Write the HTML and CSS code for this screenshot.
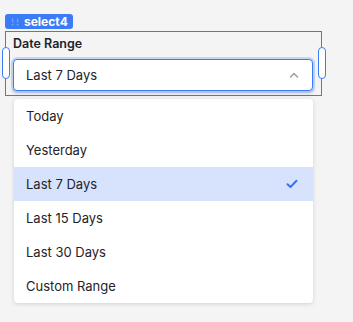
FILE: index.html
```html
<!DOCTYPE html>
<html lang="en">
<head>
    <meta charset="UTF-8">
    <title>Date Range Select</title>
    <link rel="stylesheet" href="styles.css">
</head>
<body>
    <div class="canvas">
        <div class="badge"><span class="grip">⋮⋮</span>select4</div>
        <div class="frame">
            <span class="handle handle-left"></span>
            <span class="handle handle-right"></span>
            <label class="field-label">Date Range</label>
            <div class="select">
                <span class="select-value">Last 7 Days</span>
                <svg class="chevron" width="10" height="6" viewBox="0 0 10 6">
                    <path d="M1.5 5 L5 1.5 L8.5 5" fill="none" stroke="#9ca3af" stroke-width="1.6" stroke-linecap="round" stroke-linejoin="round"/>
                </svg>
            </div>
        </div>
        <ul class="menu">
            <li class="option">Today</li>
            <li class="option">Yesterday</li>
            <li class="option selected">Last 7 Days
                <svg class="check" width="12" height="10" viewBox="0 0 12 10">
                    <path d="M1.5 5.2 L4.5 8 L10.5 1.8" fill="none" stroke="#3b6ff5" stroke-width="2" stroke-linecap="round" stroke-linejoin="round"/>
                </svg>
            </li>
            <li class="option">Last 15 Days</li>
            <li class="option">Last 30 Days</li>
            <li class="option">Custom Range</li>
        </ul>
    </div>
</body>
</html>
```

FILE: styles.css
```css
* {
    margin: 0;
    padding: 0;
    box-sizing: border-box;
}

body {
    font-family: 'Inter', 'Noto Sans', sans-serif;
    background: #f4f4f4;
    color: #1f2329;
    width: 353px;
    height: 322px;
    overflow: hidden;
}

.canvas {
    padding: 14px 0 0 5px;
}

.badge {
    display: flex;
    align-items: center;
    width: fit-content;
    height: 15px;
    padding: 0 5px 0 4px;
    background: #3b7cf6;
    color: #fff;
    font-size: 12px;
    line-height: 15px;
    font-weight: 700;
    border-radius: 3px;
    margin-bottom: 2px;
}

.grip {
    font-size: 7px;
    letter-spacing: -2px;
    color: rgba(255, 255, 255, 0.45);
    margin-right: 5px;
}

.frame {
    position: relative;
    width: 317px;
    height: 65px;
    border: 1px solid #3b7cf6;
    padding: 4px 7px 0 7px;
}

.handle {
    position: absolute;
    top: 15px;
    width: 8px;
    height: 32px;
    background: #fff;
    border: 1px solid #3b7cf6;
    border-radius: 4px;
}

.handle-left {
    left: -4px;
}

.handle-right {
    right: -5px;
}

.field-label {
    display: block;
    font-size: 12.5px;
    font-weight: 600;
    line-height: 16px;
    margin-bottom: 7px;
}

.select {
    display: flex;
    align-items: center;
    justify-content: space-between;
    height: 32px;
    width: 300px;
    padding: 0 13px 0 12px;
    background: #fff;
    border: 1.5px solid #3b7cf6;
    border-radius: 4px;
    box-shadow: 0 0 0 2px rgba(59, 124, 246, 0.25), 0 3px 4px rgba(0, 0, 0, 0.12);
    font-size: 13px;
}

.menu {
    list-style: none;
    width: 299px;
    margin: 3px 0 0 9px;
    background: #fff;
    border-radius: 4px;
    box-shadow: 0 1px 4px rgba(0, 0, 0, 0.14);
    overflow: hidden;
}

.option {
    display: flex;
    align-items: center;
    justify-content: space-between;
    height: 34px;
    padding: 0 12px;
    font-size: 13px;
}

.option.selected {
    background: #d7e3fd;
}

.check {
    margin-right: 3px;
}
```
